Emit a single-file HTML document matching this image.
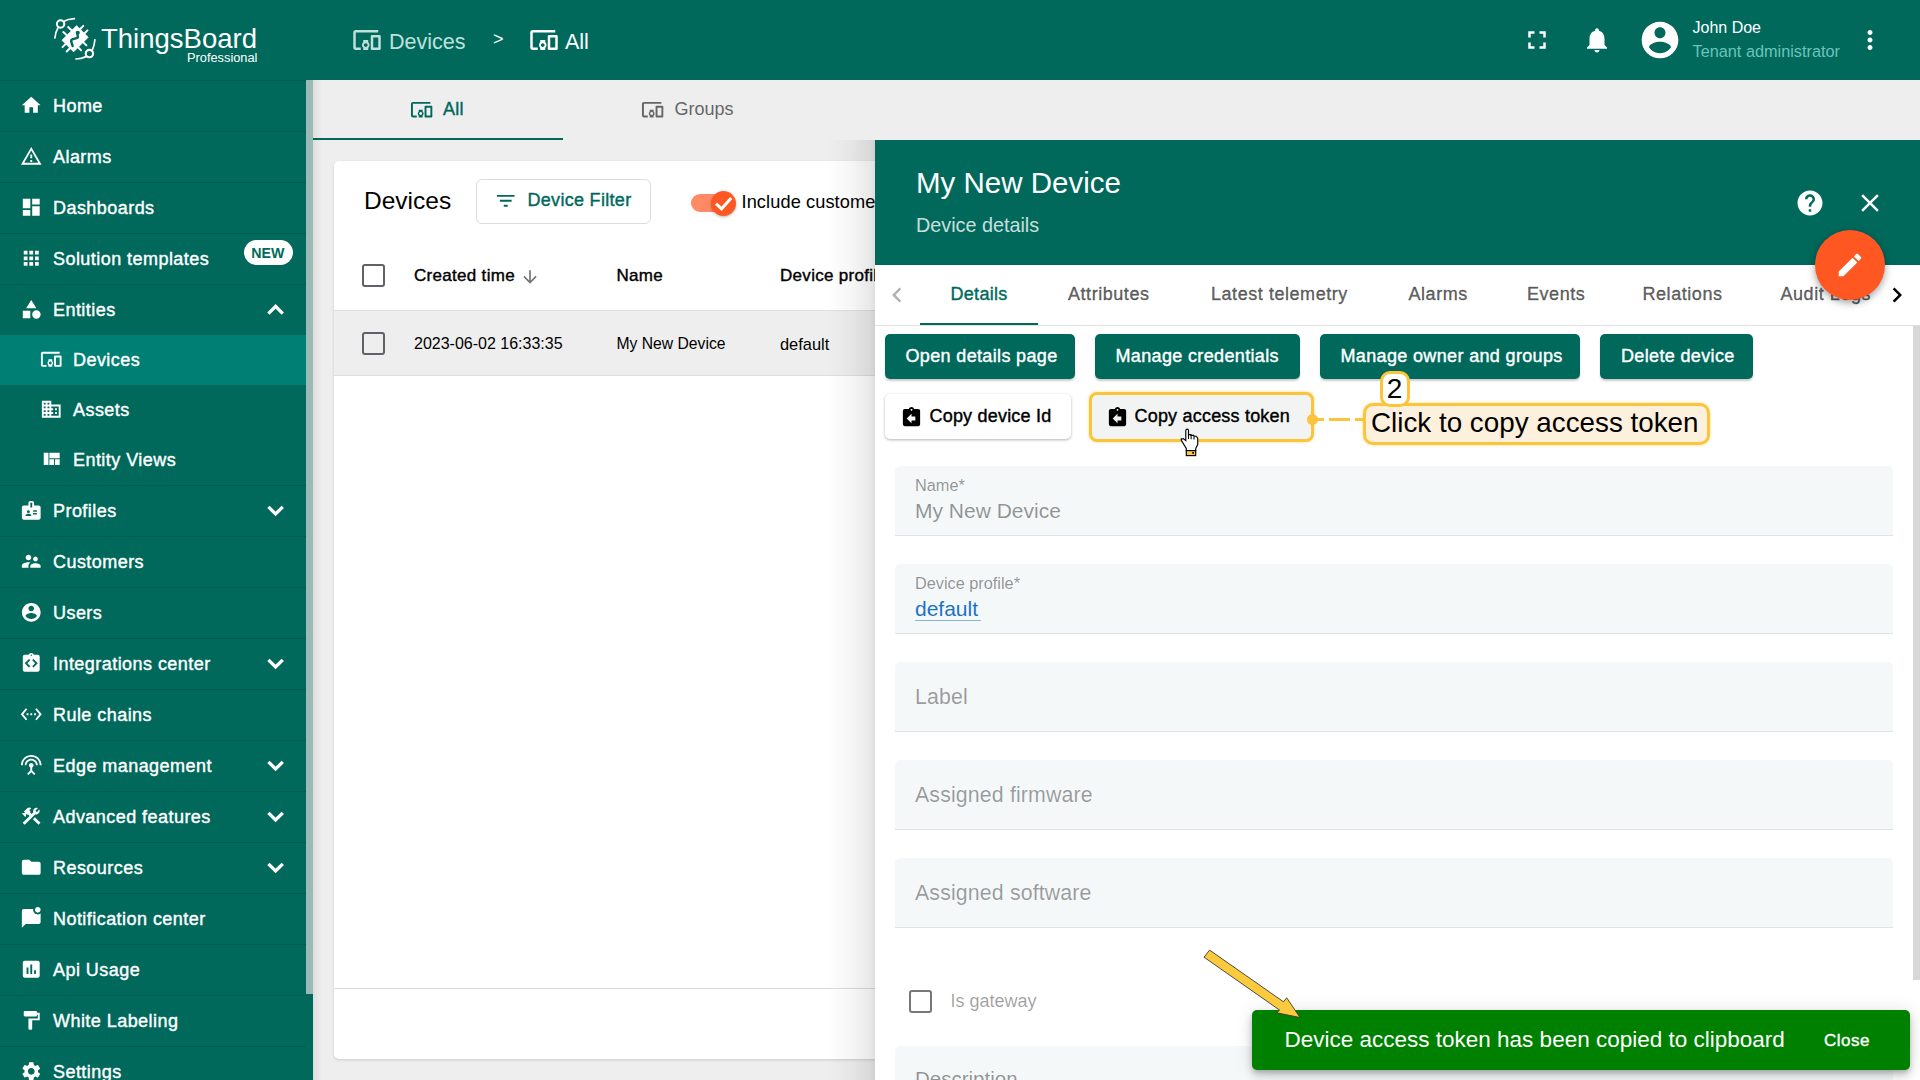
<!DOCTYPE html><html><head><meta charset="utf-8"><style>
html,body{margin:0;padding:0;width:1920px;height:1080px;overflow:hidden;background:#eeeeee;font-family:"Liberation Sans",sans-serif;}
.t{position:absolute;white-space:nowrap;line-height:1;}
.m{-webkit-text-stroke:0.4px currentColor;}
.i{position:absolute;display:block;}
.b{position:absolute;box-sizing:border-box;}
</style></head><body>
<div class="b" style="left:313px;top:80px;width:1607px;height:1000px;background:#eeeeee"></div>
<div class="b" style="left:313px;top:138px;width:250px;height:2px;background:#00695c"></div>
<svg class="i" style="left:409.8px;top:97.9px;width:23.3px;height:23.3px;" viewBox="0 0 24 24"><path fill="#00695c" d="M3 6h18V4H3c-1.1 0-2 .9-2 2v12c0 1.1.9 2 2 2h4v-2H3V6zm10 6H9v1.78c-.61.55-1 1.33-1 2.22s.39 1.67 1 2.22V20h4v-1.78c.61-.55 1-1.34 1-2.22s-.39-1.67-1-2.22V12zm-2 5.5c-.83 0-1.5-.67-1.5-1.5s.67-1.5 1.5-1.5 1.5.67 1.5 1.5-.67 1.5-1.5 1.5zM22 8h-6c-.5 0-1 .5-1 1v10c0 .5.5 1 1 1h6c.5 0 1-.5 1-1V9c0-.5-.5-1-1-1zm-1 10h-4v-8h4v8z"/></svg>
<div class="t m" style="left:443.0px;top:99.76px;font-size:18px;font-weight:400;color:#00695c;letter-spacing:0.3px;">All</div>
<svg class="i" style="left:641.0px;top:97.6px;width:23.3px;height:23.3px;" viewBox="0 0 24 24"><path fill="#666" d="M3 6h18V4H3c-1.1 0-2 .9-2 2v12c0 1.1.9 2 2 2h4v-2H3V6zm10 6H9v1.78c-.61.55-1 1.33-1 2.22s.39 1.67 1 2.22V20h4v-1.78c.61-.55 1-1.34 1-2.22s-.39-1.67-1-2.22V12zm-2 5.5c-.83 0-1.5-.67-1.5-1.5s.67-1.5 1.5-1.5 1.5.67 1.5 1.5-.67 1.5-1.5 1.5zM22 8h-6c-.5 0-1 .5-1 1v10c0 .5.5 1 1 1h6c.5 0 1-.5 1-1V9c0-.5-.5-1-1-1zm-1 10h-4v-8h4v8z"/></svg>
<div class="t" style="left:674.5px;top:99.76px;font-size:18px;font-weight:400;color:#666;">Groups</div>
<div class="b" style="left:313px;top:80px;width:9px;height:1000px;background:linear-gradient(90deg,rgba(0,0,0,.07),rgba(0,0,0,0))"></div>
<div class="b" style="left:334px;top:161px;width:700px;height:898px;background:#fff;border-radius:5px;box-shadow:0 1px 3px rgba(0,0,0,.15)"></div>
<div class="t" style="left:364.0px;top:188.86px;font-size:24.5px;font-weight:400;color:#000;">Devices</div>
<div class="b" style="left:476px;top:179px;width:175px;height:45px;border:1px solid #dcdcdc;border-radius:6px;background:#fff"></div>
<svg class="i" style="left:494.3px;top:188.8px;width:23.5px;height:23.5px;" viewBox="0 0 24 24"><path fill="#00695c" d="M10 18h4v-2h-4v2zM3 6v2h18V6H3zm3 7h12v-2H6v2z"/></svg>
<div class="t m" style="left:527.5px;top:190.56px;font-size:18px;font-weight:400;color:#00695c;letter-spacing:0.3px;">Device Filter</div>
<div class="b" style="left:691px;top:194px;width:43px;height:18px;border-radius:9px;background:#ff8a65"></div>
<div class="b" style="left:711px;top:190.5px;width:25px;height:25px;border-radius:50%;background:#ff5722;box-shadow:0 1px 3px rgba(0,0,0,.3)"></div>
<svg class="i" style="left:705px;top:190px;width:35px;height:25px" viewBox="705 190 35 25"><path d="M716 203.6L721.6 208.8L731.2 198" fill="none" stroke="#fff" stroke-width="3"/></svg>
<div class="t" style="left:741.5px;top:193.09px;font-size:18.2px;font-weight:400;color:#000;letter-spacing:0.1px;">Include customer entities</div>
<div class="b" style="left:362px;top:264px;width:22.5px;height:22.5px;border:2.5px solid #5f6368;border-radius:3px"></div>
<div class="t m" style="left:414.0px;top:267.11px;font-size:17px;font-weight:400;color:#000;letter-spacing:0.3px;">Created time</div>
<svg class="i" style="left:519.7px;top:266.5px;width:20px;height:20px;" viewBox="0 0 24 24"><path fill="#757575" d="M20 12l-1.41-1.41L13 16.17V4h-2v12.17l-5.58-5.59L4 12l8 8 8-8z"/></svg>
<div class="t m" style="left:616.5px;top:267.11px;font-size:17px;font-weight:400;color:#000;letter-spacing:0.3px;">Name</div>
<div class="t m" style="left:780.0px;top:267.11px;font-size:17px;font-weight:400;color:#000;letter-spacing:0.3px;">Device profile</div>
<div class="b" style="left:334px;top:310px;width:541px;height:66px;background:#eeeeee;border-top:1px solid #e0e0e0;border-bottom:1px solid #dedede"></div>
<div class="b" style="left:362px;top:332px;width:22.5px;height:22.5px;border:2.5px solid #5f6368;border-radius:3px"></div>
<div class="t" style="left:414.0px;top:335.85px;font-size:16px;font-weight:400;color:#000;">2023-06-02 16:33:35</div>
<div class="t" style="left:616.5px;top:336.11px;font-size:15.7px;font-weight:400;color:#000;">My New Device</div>
<div class="t" style="left:780.0px;top:335.51px;font-size:16.4px;font-weight:400;color:#000;">default</div>
<div class="b" style="left:334px;top:988px;width:541px;height:1px;background:#dcdcdc"></div>
<div class="b" style="left:0;top:0;width:1920px;height:80px;background:#00695c"></div>
<svg class="i" style="left:352.0px;top:25.0px;width:30px;height:30px;" viewBox="0 0 24 24"><path fill="#bfe0db" d="M3 6h18V4H3c-1.1 0-2 .9-2 2v12c0 1.1.9 2 2 2h4v-2H3V6zm10 6H9v1.78c-.61.55-1 1.33-1 2.22s.39 1.67 1 2.22V20h4v-1.78c.61-.55 1-1.34 1-2.22s-.39-1.67-1-2.22V12zm-2 5.5c-.83 0-1.5-.67-1.5-1.5s.67-1.5 1.5-1.5 1.5.67 1.5 1.5-.67 1.5-1.5 1.5zM22 8h-6c-.5 0-1 .5-1 1v10c0 .5.5 1 1 1h6c.5 0 1-.5 1-1V9c0-.5-.5-1-1-1zm-1 10h-4v-8h4v8z"/></svg>
<div class="t" style="left:389.0px;top:32.10px;font-size:21.5px;font-weight:400;color:#bfe0db;">Devices</div>
<div class="t" style="left:493.0px;top:29.96px;font-size:18px;font-weight:400;color:#fff;">&gt;</div>
<svg class="i" style="left:529.0px;top:25.0px;width:30px;height:30px;" viewBox="0 0 24 24"><path fill="#fff" d="M3 6h18V4H3c-1.1 0-2 .9-2 2v12c0 1.1.9 2 2 2h4v-2H3V6zm10 6H9v1.78c-.61.55-1 1.33-1 2.22s.39 1.67 1 2.22V20h4v-1.78c.61-.55 1-1.34 1-2.22s-.39-1.67-1-2.22V12zm-2 5.5c-.83 0-1.5-.67-1.5-1.5s.67-1.5 1.5-1.5 1.5.67 1.5 1.5-.67 1.5-1.5 1.5zM22 8h-6c-.5 0-1 .5-1 1v10c0 .5.5 1 1 1h6c.5 0 1-.5 1-1V9c0-.5-.5-1-1-1zm-1 10h-4v-8h4v8z"/></svg>
<div class="t" style="left:565.0px;top:32.10px;font-size:21.5px;font-weight:400;color:#fff;">All</div>
<svg class="i" style="left:1522.0px;top:25.0px;width:30px;height:30px;" viewBox="0 0 24 24"><path fill="#fff" d="M7 14H5v5h5v-2H7v-3zm-2-4h2V7h3V5H5v5zm12 7h-3v2h5v-5h-2v3zM14 5v2h3v3h2V5h-5z"/></svg>
<svg class="i" style="left:1582.0px;top:25.0px;width:30px;height:30px;" viewBox="0 0 24 24"><path fill="#fff" d="M12 22c1.1 0 2-.9 2-2h-4c0 1.1.89 2 2 2zm6-6v-5c0-3.07-1.64-5.64-4.5-6.32V4c0-.83-.67-1.5-1.5-1.5s-1.5.67-1.5 1.5v.68C7.63 5.36 6 7.92 6 11v5l-2 2v1h16v-1l-2-2z"/></svg>
<svg class="i" style="left:1638.0px;top:18.4px;width:44px;height:44px;" viewBox="0 0 24 24"><path fill="#fff" d="M12 2C6.48 2 2 6.48 2 12s4.48 10 10 10 10-4.48 10-10S17.52 2 12 2zm0 3c1.66 0 3 1.34 3 3s-1.34 3-3 3-3-1.34-3-3 1.34-3 3-3zm0 14.2c-2.5 0-4.71-1.28-6-3.22.03-1.99 4-3.08 6-3.08 1.99 0 5.970 1.09 6 3.08-1.29 1.94-3.5 3.22-6 3.22z"/></svg>
<div class="t" style="left:1692.5px;top:19.65px;font-size:16px;font-weight:400;color:#fff;">John Doe</div>
<div class="t" style="left:1692.5px;top:43.00px;font-size:16.3px;font-weight:400;color:#6cc4ba;">Tenant administrator</div>
<svg class="i" style="left:1855.0px;top:25.0px;width:30px;height:30px;" viewBox="0 0 24 24"><path fill="#fff" d="M12 8c1.1 0 2-.9 2-2s-.9-2-2-2-2 .9-2 2 .9 2 2 2zm0 2c-1.1 0-2 .9-2 2s.9 2 2 2 2-.9 2-2-.9-2-2-2zm0 6c-1.1 0-2 .9-2 2s.9 2 2 2 2-.9 2-2-.9-2-2-2z"/></svg>
<svg class="i" style="left:50px;top:14px;width:50px;height:50px" viewBox="0 0 50 50"><g fill="none" stroke="#fff" stroke-linecap="round"><circle cx="10.6" cy="10" r="3.7" stroke-width="2.1"/><circle cx="39.4" cy="39.6" r="3.7" stroke-width="2.1"/><path d="M13.9 7.2 Q18 5 24.4 4.6" stroke-width="1.7"/><path d="M8 13.8 Q5.5 18 4.9 24" stroke-width="1.7"/><path d="M42.4 35.9 Q44.5 31 44.9 25.8" stroke-width="1.7"/><path d="M36.2 42.6 Q31 44.8 25.9 45" stroke-width="1.7"/><path d="M13.3 18.1L17 21.5M18.1 13.1L21.8 16.6M33.3 11.9L30 15.3M37.5 16.4L34.1 19.8M36.4 31.4L33 28M31.1 36.4L27.8 33M12.5 33.1L16 29.6M16.7 37.5L20.1 34" stroke-width="2"/></g><path d="M26.6 11.5L38.3 23.2L23.6 37.9L11.9 26.2Z" fill="#fff" stroke="#fff" stroke-width="0.6" stroke-linejoin="round"/><path d="M27 18.4L27.8 21.6Q28.5 23.5 26.5 24.1L22.2 25.4Q20.9 25.9 21.2 27.4L22.6 32" fill="none" stroke="#00695c" stroke-width="2.5" stroke-linecap="round" stroke-linejoin="round"/><circle cx="27.9" cy="18.7" r="1.9" fill="#00695c"/></svg>
<div class="t" style="left:101.0px;top:24.82px;font-size:27.5px;font-weight:400;color:#fff;">ThingsBoard</div>
<div class="t" style="left:187.0px;top:51.86px;font-size:12.8px;font-weight:400;color:#fff;">Professional</div>
<div class="b" style="left:0;top:80px;width:313px;height:1000px;background:#00695c"></div>
<div class="b" style="left:306px;top:80px;width:7px;height:914px;background:#9bbab6"></div>
<div class="b" style="left:0;top:80px;width:306px;height:1px;background:#005b50"></div>
<svg class="i" style="left:20.0px;top:93.9px;width:22.5px;height:22.5px;" viewBox="0 0 24 24"><path fill="#fff" d="M10 20v-6h4v6h5v-8h3L12 3 2 12h3v8z"/></svg>
<div class="t m" style="left:53.0px;top:96.86px;font-size:18px;font-weight:400;color:#fff;letter-spacing:0.45px;">Home</div>
<div class="b" style="left:0;top:131px;width:306px;height:1px;background:#005b50"></div>
<svg class="i" style="left:20.0px;top:144.9px;width:22.5px;height:22.5px;" viewBox="0 0 24 24"><path fill="#fff" d="M12 5.99L19.53 19H4.47L12 5.99M12 2L1 21h22L12 2zm1 14h-2v2h2v-2zm0-6h-2v4h2v-4z"/></svg>
<div class="t m" style="left:53.0px;top:147.86px;font-size:18px;font-weight:400;color:#fff;letter-spacing:0.45px;">Alarms</div>
<div class="b" style="left:0;top:182px;width:306px;height:1px;background:#005b50"></div>
<svg class="i" style="left:20.0px;top:195.9px;width:22.5px;height:22.5px;" viewBox="0 0 24 24"><path fill="#fff" d="M3 13h8V3H3v10zm0 8h8v-6H3v6zm10 0h8V11h-8v10zm0-18v6h8V3h-8z"/></svg>
<div class="t m" style="left:53.0px;top:198.86px;font-size:18px;font-weight:400;color:#fff;letter-spacing:0.45px;">Dashboards</div>
<div class="b" style="left:0;top:233px;width:306px;height:1px;background:#005b50"></div>
<svg class="i" style="left:20.0px;top:246.9px;width:22.5px;height:22.5px;" viewBox="0 0 24 24"><path fill="#fff" d="M4 8h4V4H4v4zm6 12h4v-4h-4v4zm-6 0h4v-4H4v4zm0-6h4v-4H4v4zm6 0h4v-4h-4v4zm6-10v4h4V4h-4zm-6 4h4V4h-4v4zm6 6h4v-4h-4v4zm0 6h4v-4h-4v4z"/></svg>
<div class="t m" style="left:53.0px;top:249.86px;font-size:18px;font-weight:400;color:#fff;letter-spacing:0.45px;">Solution templates</div>
<div class="b" style="left:244px;top:240px;width:49px;height:25px;border-radius:12.5px;background:#fff"></div>
<div class="t" style="left:251.2px;top:245.68px;font-size:14.2px;font-weight:700;color:#00695c;">NEW</div>
<div class="b" style="left:0;top:284px;width:306px;height:1px;background:#005b50"></div>
<svg class="i" style="left:20.0px;top:297.9px;width:22.5px;height:22.5px;" viewBox="0 0 24 24"><path fill="#fff" d="M12 2l-5.5 9h11zM17.5 13a4.5 4.5 0 1 0 0 9a4.5 4.5 0 1 0 0-9zM3 13.5h8v8H3z"/></svg>
<div class="t m" style="left:53.0px;top:300.86px;font-size:18px;font-weight:400;color:#fff;letter-spacing:0.45px;">Entities</div>
<svg class="i" style="left:260px;top:285px;width:32px;height:50px" viewBox="260 285 32 50"><path d="M268.4 313.6L275.6 306.4L282.8 313.6" fill="none" stroke="#fff" stroke-width="3.3"/></svg>
<div class="b" style="left:0;top:335px;width:306px;height:50px;background:#008074"></div>
<svg class="i" style="left:40.0px;top:347.9px;width:22.5px;height:22.5px;" viewBox="0 0 24 24"><path fill="#fff" d="M3 6h18V4H3c-1.1 0-2 .9-2 2v12c0 1.1.9 2 2 2h4v-2H3V6zm10 6H9v1.78c-.61.55-1 1.33-1 2.22s.39 1.67 1 2.22V20h4v-1.78c.61-.55 1-1.34 1-2.22s-.39-1.67-1-2.22V12zm-2 5.5c-.83 0-1.5-.67-1.5-1.5s.67-1.5 1.5-1.5 1.5.67 1.5 1.5-.67 1.5-1.5 1.5zM22 8h-6c-.5 0-1 .5-1 1v10c0 .5.5 1 1 1h6c.5 0 1-.5 1-1V9c0-.5-.5-1-1-1zm-1 10h-4v-8h4v8z"/></svg>
<div class="t m" style="left:73.0px;top:350.86px;font-size:18px;font-weight:400;color:#fff;letter-spacing:0.45px;">Devices</div>
<svg class="i" style="left:40.0px;top:397.9px;width:22.5px;height:22.5px;" viewBox="0 0 24 24"><path fill="#fff" d="M12 7V3H2v18h20V7H12zM6 19H4v-2h2v2zm0-4H4v-2h2v2zm0-4H4V9h2v2zm0-4H4V5h2v2zm4 12H8v-2h2v2zm0-4H8v-2h2v2zm0-4H8V9h2v2zm0-4H8V5h2v2zm10 12h-8v-2h2v-2h-2v-2h2v-2h-2V9h8v10zm-2-8h-2v2h2v-2zm0 4h-2v2h2v-2z"/></svg>
<div class="t m" style="left:73.0px;top:400.86px;font-size:18px;font-weight:400;color:#fff;letter-spacing:0.45px;">Assets</div>
<svg class="i" style="left:40.0px;top:447.9px;width:22.5px;height:22.5px;" viewBox="0 0 24 24"><path fill="#fff" d="M10 18h5v-6h-5v6zm-6 0h5V5H4v13zm12 0h5v-6h-5v6zM10 5v6h11V5H10z"/></svg>
<div class="t m" style="left:73.0px;top:450.86px;font-size:18px;font-weight:400;color:#fff;letter-spacing:0.45px;">Entity Views</div>
<div class="b" style="left:0;top:485px;width:306px;height:1px;background:#005b50"></div>
<svg class="i" style="left:20.0px;top:498.9px;width:22.5px;height:22.5px;" viewBox="0 0 24 24"><path fill="#fff" d="M20 7h-5V4c0-1.1-.9-2-2-2h-2c-1.1 0-2 .9-2 2v3H4c-1.1 0-2 .9-2 2v11c0 1.1.9 2 2 2h16c1.1 0 2-.9 2-2V9c0-1.1-.9-2-2-2zM9 12c.83 0 1.5.67 1.5 1.5S9.830 15 9 15s-1.5-.67-1.5-1.5S8.17 12 9 12zm3 6H6v-.43c0-.6.36-1.15.92-1.39.64-.28 1.34-.43 2.080-.43s1.44.15 2.08.43c.55.24.92.78.92 1.39V18zm1-9h-2V4h2v5zm5 7.5h-4V15h4v1.5zm0-3h-4V12h4v1.5z"/></svg>
<div class="t m" style="left:53.0px;top:501.86px;font-size:18px;font-weight:400;color:#fff;letter-spacing:0.45px;">Profiles</div>
<svg class="i" style="left:260px;top:486px;width:32px;height:50px" viewBox="260 486 32 50"><path d="M268.4 506.8L275.6 514L282.8 506.8" fill="none" stroke="#fff" stroke-width="3.3"/></svg>
<div class="b" style="left:0;top:536px;width:306px;height:1px;background:#005b50"></div>
<svg class="i" style="left:20.0px;top:549.9px;width:22.5px;height:22.5px;" viewBox="0 0 24 24"><path fill="#fff" d="M16.5 12c1.38 0 2.49-1.12 2.49-2.5S17.88 7 16.5 7C15.12 7 14 8.12 14 9.5s1.12 2.5 2.5 2.5zM9 11c1.66 0 2.99-1.34 2.99-3S10.66 5 9 5C7.34 5 6 6.34 6 8s1.34 3 3 3zm7.5 3c-1.83 0-5.5.92-5.5 2.75V19h11v-2.25c0-1.83-3.67-2.75-5.5-2.75zM9 13c-2.33 0-7 1.17-7 3.5V19h7v-2.25c0-.85.33-2.34 2.37-3.47C10.5 13.1 9.66 13 9 13z"/></svg>
<div class="t m" style="left:53.0px;top:552.86px;font-size:18px;font-weight:400;color:#fff;letter-spacing:0.45px;">Customers</div>
<div class="b" style="left:0;top:587px;width:306px;height:1px;background:#005b50"></div>
<svg class="i" style="left:20.0px;top:600.9px;width:22.5px;height:22.5px;" viewBox="0 0 24 24"><path fill="#fff" d="M12 2C6.48 2 2 6.48 2 12s4.48 10 10 10 10-4.48 10-10S17.52 2 12 2zm0 3c1.66 0 3 1.34 3 3s-1.34 3-3 3-3-1.34-3-3 1.34-3 3-3zm0 14.2c-2.5 0-4.71-1.28-6-3.22.03-1.99 4-3.08 6-3.08 1.99 0 5.970 1.09 6 3.08-1.29 1.94-3.5 3.22-6 3.22z"/></svg>
<div class="t m" style="left:53.0px;top:603.86px;font-size:18px;font-weight:400;color:#fff;letter-spacing:0.45px;">Users</div>
<div class="b" style="left:0;top:638px;width:306px;height:1px;background:#005b50"></div>
<svg class="i" style="left:20.0px;top:651.9px;width:22.5px;height:22.5px;" viewBox="0 0 24 24"><path fill="#fff" d="M19 3h-4.18C14.4 1.84 13.3 1 12 1s-2.4.84-2.82 2H5c-1.1 0-2 .9-2 2v14c0 1.1.9 2 2 2h14c1.1 0 2-.9 2-2V5c0-1.1-.9-2-2-2zm-8 12.17L9.59 16.59 5 12l4.59-4.59L11 8.83 7.83 12 11 15.17zM12 4.25c-.41 0-.75-.34-.75-.75s.34-.75.75-.75.75.34.75.75-.34.75-.75.75zm2.41 12.34L13 15.17 16.17 12 13 8.83l1.41-1.42L19 12l-4.59 4.59z"/></svg>
<div class="t m" style="left:53.0px;top:654.86px;font-size:18px;font-weight:400;color:#fff;letter-spacing:0.45px;">Integrations center</div>
<svg class="i" style="left:260px;top:639px;width:32px;height:50px" viewBox="260 639 32 50"><path d="M268.4 659.8L275.6 667L282.8 659.8" fill="none" stroke="#fff" stroke-width="3.3"/></svg>
<div class="b" style="left:0;top:689px;width:306px;height:1px;background:#005b50"></div>
<svg class="i" style="left:20.0px;top:702.9px;width:22.5px;height:22.5px;" viewBox="0 0 24 24"><path fill="#fff" d="M7.77 6.76L6.23 5.48.82 12l5.41 6.52 1.54-1.28L3.42 12l4.35-5.24zM7 13h2v-2H7v2zm10-2h-2v2h2v-2zm-6 2h2v-2h-2v2zm6.77-7.52l-1.54 1.28L20.58 12l-4.35 5.24 1.54 1.28L23.18 12l-5.41-6.52z"/></svg>
<div class="t m" style="left:53.0px;top:705.86px;font-size:18px;font-weight:400;color:#fff;letter-spacing:0.45px;">Rule chains</div>
<div class="b" style="left:0;top:740px;width:306px;height:1px;background:#005b50"></div>
<svg class="i" style="left:20.0px;top:753.9px;width:22.5px;height:22.5px;" viewBox="0 0 24 24"><path fill="#fff" d="M12 5c-3.87 0-7 3.13-7 7h2c0-2.76 2.24-5 5-5s5 2.24 5 5h2c0-3.87-3.13-7-7-7zm1 9.29c.88-.39 1.5-1.26 1.5-2.290 0-1.38-1.12-2.5-2.5-2.5S9.5 10.62 9.5 12c0 1.02.62 1.9 1.5 2.29v3.3L7.59 21 9 22.41l3-3 3 3L16.41 21 13 17.59v-3.3zM12 1C5.93 1 1 5.93 1 12h2c0-4.97 4.03-9 9-9s9 4.03 9 9h2c0-6.07-4.93-11-11-11z"/></svg>
<div class="t m" style="left:53.0px;top:756.86px;font-size:18px;font-weight:400;color:#fff;letter-spacing:0.45px;">Edge management</div>
<svg class="i" style="left:260px;top:741px;width:32px;height:50px" viewBox="260 741 32 50"><path d="M268.4 761.8L275.6 769L282.8 761.8" fill="none" stroke="#fff" stroke-width="3.3"/></svg>
<div class="b" style="left:0;top:791px;width:306px;height:1px;background:#005b50"></div>
<svg class="i" style="left:20.0px;top:804.9px;width:22.5px;height:22.5px;" viewBox="0 0 24 24"><path fill="#fff" d="M13.783 15.172l2.121-2.121 5.996 5.996-2.121 2.121zM17.5 10c1.93 0 3.5-1.57 3.5-3.5 0-.58-.16-1.12-.41-1.6l-2.7 2.7-1.49-1.49 2.7-2.7c-.48-.25-1.02-.41-1.6-.41C15.57 3 14 4.57 14 6.5c0 .41.08.8.21 1.16l-1.85 1.85-1.78-1.78.71-.71-1.41-1.41L12 3.49c-1.17-1.17-3.07-1.17-4.240 0L4.22 7.03l1.41 1.41H2.81l-.71.71 3.54 3.54.71-.71V9.15l1.41 1.41.71-.71 1.78 1.78-7.41 7.41 2.12 2.12L16.34 9.79c.36.13.75.21 1.16.21z"/></svg>
<div class="t m" style="left:53.0px;top:807.86px;font-size:18px;font-weight:400;color:#fff;letter-spacing:0.45px;">Advanced features</div>
<svg class="i" style="left:260px;top:792px;width:32px;height:50px" viewBox="260 792 32 50"><path d="M268.4 812.8L275.6 820L282.8 812.8" fill="none" stroke="#fff" stroke-width="3.3"/></svg>
<div class="b" style="left:0;top:842px;width:306px;height:1px;background:#005b50"></div>
<svg class="i" style="left:20.0px;top:855.9px;width:22.5px;height:22.5px;" viewBox="0 0 24 24"><path fill="#fff" d="M10 4H4c-1.1 0-1.99.9-1.99 2L2 18c0 1.1.9 2 2 2h16c1.1 0 2-.9 2-2V8c0-1.1-.9-2-2-2h-8l-2-2z"/></svg>
<div class="t m" style="left:53.0px;top:858.86px;font-size:18px;font-weight:400;color:#fff;letter-spacing:0.45px;">Resources</div>
<svg class="i" style="left:260px;top:843px;width:32px;height:50px" viewBox="260 843 32 50"><path d="M268.4 863.8L275.6 871L282.8 863.8" fill="none" stroke="#fff" stroke-width="3.3"/></svg>
<div class="b" style="left:0;top:893px;width:306px;height:1px;background:#005b50"></div>
<svg class="i" style="left:20.0px;top:906.9px;width:22.5px;height:22.5px;" viewBox="0 0 24 24"><path fill="#fff" d="M22 6.98V16c0 1.1-.9 2-2 2H6l-4 4V4c0-1.1.9-2 2-2h10.1c-.06.32-.1.66-.1 1 0 2.76 2.24 5 5 5 1.13 0 2.16-.39 3-1.02zM16 3c0 1.66 1.34 3 3 3s3-1.34 3-3-1.34-3-3-3-3 1.34-3 3z"/></svg>
<div class="t m" style="left:53.0px;top:909.86px;font-size:18px;font-weight:400;color:#fff;letter-spacing:0.45px;">Notification center</div>
<div class="b" style="left:0;top:944px;width:306px;height:1px;background:#005b50"></div>
<svg class="i" style="left:20.0px;top:957.9px;width:22.5px;height:22.5px;" viewBox="0 0 24 24"><path fill="#fff" d="M19 3H5c-1.1 0-2 .9-2 2v14c0 1.1.9 2 2 2h14c1.1 0 2-.9 2-2V5c0-1.1-.9-2-2-2zM9 17H7v-7h2v7zm4 0h-2V7h2v10zm4 0h-2v-4h2v4z"/></svg>
<div class="t m" style="left:53.0px;top:960.86px;font-size:18px;font-weight:400;color:#fff;letter-spacing:0.45px;">Api Usage</div>
<div class="b" style="left:0;top:995px;width:306px;height:1px;background:#005b50"></div>
<svg class="i" style="left:20.0px;top:1008.9px;width:22.5px;height:22.5px;" viewBox="0 0 24 24"><path fill="#fff" d="M18 4V3c0-.55-.45-1-1-1H5c-.55 0-1 .45-1 1v4c0 .55.45 1 1 1h12c.55 0 1-.45 1-1V6h1v4H9v11c0 .55.45 1 1 1h2c.55 0 1-.45 1-1v-9h8V4h-3z"/></svg>
<div class="t m" style="left:53.0px;top:1011.86px;font-size:18px;font-weight:400;color:#fff;letter-spacing:0.45px;">White Labeling</div>
<div class="b" style="left:0;top:1046px;width:306px;height:1px;background:#005b50"></div>
<svg class="i" style="left:20.0px;top:1059.9px;width:22.5px;height:22.5px;" viewBox="0 0 24 24"><path fill="#fff" d="M19.14 12.94c.04-.3.06-.61.06-.94 0-.32-.02-.64-.07-.94l2.03-1.58c.18-.14.23-.41.12-.61l-1.92-3.32c-.12-.22-.37-.29-.59-.22l-2.39.96c-.5-.38-1.03-.7-1.62-.94l-.36-2.54c-.04-.24-.24-.41-.48-.41h-3.84c-.24 0-.43.17-.47.41l-.36 2.54c-.59.24-1.13.57-1.62.94l-2.39-.96c-.22-.08-.47 0-.59.22L2.74 8.87c-.12.21-.08.47.12.61l2.030 1.58c-.05.3-.09.63-.09.94s.02.64.07.94l-2.03 1.58c-.18.14-.23.41-.12.61l1.92 3.32c.12.22.37.29.59.22l2.39-.96c.5.38 1.03.7 1.62.94l.36 2.54c.05.24.24.41.48.41h3.84c.24 0 .44-.17.47-.41l.36-2.54c.59-.24 1.13-.56 1.62-.94l2.39.96c.22.08.47 0 .59-.22l1.92-3.32c.12-.22.07-.47-.12-.61l-2.01-1.58zM12 15.6c-1.98 0-3.6-1.62-3.6-3.6s1.62-3.6 3.6-3.6 3.6 1.62 3.6 3.6-1.62 3.6-3.6 3.6z"/></svg>
<div class="t m" style="left:53.0px;top:1062.86px;font-size:18px;font-weight:400;color:#fff;letter-spacing:0.45px;">Settings</div>
<div class="b" style="left:827px;top:140px;width:48px;height:940px;background:linear-gradient(90deg,rgba(0,0,0,0),rgba(0,0,0,.035) 50%,rgba(0,0,0,.09) 90%,rgba(0,0,0,.13))"></div>
<div class="b" style="left:875px;top:140px;width:1045px;height:940px;background:#fff"></div>
<div class="b" style="left:875px;top:140px;width:1045px;height:125px;background:#00695c"></div>
<div class="t" style="left:916.0px;top:168.12px;font-size:29.5px;font-weight:400;color:#fff;">My New Device</div>
<div class="t" style="left:916.0px;top:215.84px;font-size:19.8px;font-weight:400;color:rgba(255,255,255,.8);">Device details</div>
<svg class="i" style="left:1795.0px;top:188.0px;width:30px;height:30px;" viewBox="0 0 24 24"><path fill="#fff" d="M12 2C6.48 2 2 6.48 2 12s4.48 10 10 10 10-4.48 10-10S17.52 2 12 2zm1 17h-2v-2h2v2zm2.07-7.75l-.9.92C13.45 12.9 13 13.5 13 15h-2v-.5c0-1.1.45-2.1 1.17-2.83l1.24-1.26c.37-.36.59-.86.59-1.41 0-1.1-.9-2-2-2s-2 .9-2 2H8c0-2.21 1.79-4 4-4s4 1.79 4 4c0 .88-.36 1.68-.93 2.25z"/></svg>
<svg class="i" style="left:1855.0px;top:188.0px;width:30px;height:30px;" viewBox="0 0 24 24"><path fill="#fff" d="M19 6.41L17.59 5 12 10.59 6.41 5 5 6.41 10.59 12 5 17.59 6.41 19 12 13.41 17.59 19 19 17.59 13.41 12z"/></svg>
<div class="b" style="left:875px;top:325px;width:1045px;height:1px;background:#e0e0e0"></div>
<svg class="i" style="left:882.0px;top:280.0px;width:30px;height:30px;" viewBox="0 0 24 24"><path fill="rgba(0,0,0,.3)" d="M15.41 7.41L14 6l-6 6 6 6 1.41-1.41L10.83 12z"/></svg>
<div class="t m" style="left:950.5px;top:284.76px;font-size:18px;font-weight:400;color:#00695c;letter-spacing:0.3px;">Details</div>
<div class="b" style="left:920px;top:322.5px;width:118px;height:2.5px;background:#00695c"></div>
<div class="t m" style="left:1068.0px;top:284.76px;font-size:18px;font-weight:400;color:rgba(0,0,0,.6);letter-spacing:0.55px;">Attributes</div>
<div class="t m" style="left:1211.0px;top:284.76px;font-size:18px;font-weight:400;color:rgba(0,0,0,.6);letter-spacing:0.55px;">Latest telemetry</div>
<div class="t m" style="left:1408.5px;top:284.76px;font-size:18px;font-weight:400;color:rgba(0,0,0,.6);letter-spacing:0.55px;">Alarms</div>
<div class="t m" style="left:1527.0px;top:284.76px;font-size:18px;font-weight:400;color:rgba(0,0,0,.6);letter-spacing:0.55px;">Events</div>
<div class="t m" style="left:1642.5px;top:284.76px;font-size:18px;font-weight:400;color:rgba(0,0,0,.6);letter-spacing:0.55px;">Relations</div>
<div class="t m" style="left:1780.5px;top:284.76px;font-size:18px;font-weight:400;color:rgba(0,0,0,.6);letter-spacing:0.55px;">Audit Logs</div>
<div class="b" style="left:1876px;top:266px;width:37px;height:58px;background:#fff"></div>
<svg class="i" style="left:1882.0px;top:280.0px;width:30px;height:30px;" viewBox="0 0 24 24"><path fill="#000" d="M10 6L8.59 7.41 13.17 12l-4.58 4.59L10 18l6-6z"/></svg>
<div class="b" style="left:1815px;top:230px;width:70px;height:70px;border-radius:50%;background:#ff5722;box-shadow:0 3px 6px rgba(0,0,0,.25),0 2px 12px rgba(0,0,0,.15)"></div>
<svg class="i" style="left:1835.0px;top:250.0px;width:30px;height:30px;" viewBox="0 0 24 24"><path fill="#fff" d="M3 17.25V21h3.75L17.81 9.94l-3.75-3.75L3 17.25zM20.71 7.04c.39-.39.39-1.02 0-1.41l-2.34-2.34c-.39-.39-1.02-.39-1.41 0l-1.83 1.83 3.75 3.75 1.83-1.83z"/></svg>
<div class="b" style="left:1913px;top:326px;width:7px;height:654px;background:#d7d7d7"></div>
<div class="b" style="left:885px;top:334px;width:190px;height:45px;border-radius:5px;background:#00695c;box-shadow:0 2px 2px rgba(0,0,0,.2)"></div>
<div class="t m" style="left:905.5px;top:347.16px;font-size:18px;font-weight:400;color:#fff;letter-spacing:0.35px;">Open details page</div>
<div class="b" style="left:1095px;top:334px;width:205px;height:45px;border-radius:5px;background:#00695c;box-shadow:0 2px 2px rgba(0,0,0,.2)"></div>
<div class="t m" style="left:1115.5px;top:347.16px;font-size:18px;font-weight:400;color:#fff;letter-spacing:0.35px;">Manage credentials</div>
<div class="b" style="left:1320px;top:334px;width:260px;height:45px;border-radius:5px;background:#00695c;box-shadow:0 2px 2px rgba(0,0,0,.2)"></div>
<div class="t m" style="left:1340.5px;top:347.16px;font-size:18px;font-weight:400;color:#fff;letter-spacing:0.35px;">Manage owner and groups</div>
<div class="b" style="left:1600px;top:334px;width:153px;height:45px;border-radius:5px;background:#00695c;box-shadow:0 2px 2px rgba(0,0,0,.2)"></div>
<div class="t m" style="left:1621.0px;top:347.16px;font-size:18px;font-weight:400;color:#fff;letter-spacing:0.35px;">Delete device</div>
<div class="b" style="left:885px;top:394px;width:186px;height:45px;border-radius:5px;background:#fff;box-shadow:0 1px 3px rgba(0,0,0,.3)"></div>
<svg class="i" style="left:900.0px;top:406.0px;width:23px;height:23px;" viewBox="0 0 24 24"><path fill="#000" d="M19 3h-4.18C14.4 1.84 13.3 1 12 1c-1.3 0-2.4.84-2.82 2H5c-1.1 0-2 .9-2 2v14c0 1.1.9 2 2 2h14c1.1 0 2-.9 2-2V5c0-1.1-.9-2-2-2zm-7 0c.55 0 1 .45 1 1s-.45 1-1 1-1-.45-1-1 .45-1 1-1zm4 12h-4v3l-5-5 5-5v3h4v4z"/></svg>
<div class="t m" style="left:929.5px;top:407.26px;font-size:18px;font-weight:400;color:#000;letter-spacing:0.2px;">Copy device Id</div>
<div class="b" style="left:1089px;top:391.5px;width:225px;height:50.5px;border-radius:8px;background:#f2f4f4;border:3px solid #fbc43a;box-shadow:0 0 3px rgba(251,196,58,.6)"></div>
<svg class="i" style="left:1106.0px;top:406.0px;width:23px;height:23px;" viewBox="0 0 24 24"><path fill="#000" d="M19 3h-4.18C14.4 1.84 13.3 1 12 1c-1.3 0-2.4.84-2.82 2H5c-1.1 0-2 .9-2 2v14c0 1.1.9 2 2 2h14c1.1 0 2-.9 2-2V5c0-1.1-.9-2-2-2zm-7 0c.55 0 1 .45 1 1s-.45 1-1 1-1-.45-1-1 .45-1 1-1zm4 12h-4v3l-5-5 5-5v3h4v4z"/></svg>
<div class="t m" style="left:1134.5px;top:407.26px;font-size:18px;font-weight:400;color:#000;letter-spacing:0.2px;">Copy access token</div>
<div class="b" style="left:1306.7px;top:414px;width:11px;height:11px;border-radius:50%;background:#fbc43a"></div>
<div class="b" style="left:1312px;top:418px;width:52px;height:3px;background:linear-gradient(90deg,#fbc43a 0 11.7px,transparent 11.7px 17px,#fbc43a 17px 37.9px,transparent 37.9px 43px,#fbc43a 43px)"></div>
<div class="b" style="left:1363px;top:403.2px;width:347px;height:41.5px;border-radius:10px;background:#fdf0dd;border:3px solid #fbc43a;box-shadow:0 0 3px rgba(251,196,58,.6)"></div>
<div class="t" style="left:1371.0px;top:408.86px;font-size:27.8px;font-weight:400;color:#000;">Click to copy access token</div>
<div class="b" style="left:1380px;top:371.1px;width:30px;height:35.6px;border-radius:10px;background:#fff;border:3px solid #fbc43a"></div>
<div class="t" style="left:1386.8px;top:375.39px;font-size:28px;font-weight:400;color:#000;">2</div>
<div class="b" style="left:895px;top:466px;width:998px;height:70px;background:#f5f8f9;border-radius:5px 5px 0 0;border-bottom:1px solid #dfe3e5"></div>
<div class="t" style="left:915.0px;top:476.50px;font-size:16.3px;font-weight:400;color:rgba(0,0,0,.42);">Name*</div>
<div class="t" style="left:915.0px;top:500.02px;font-size:21px;font-weight:400;color:rgba(0,0,0,.42);">My New Device</div>
<div class="b" style="left:895px;top:564px;width:998px;height:70px;background:#f5f8f9;border-radius:5px 5px 0 0;border-bottom:1px solid #dfe3e5"></div>
<div class="t" style="left:915.0px;top:574.50px;font-size:16.3px;font-weight:400;color:rgba(0,0,0,.42);">Device profile*</div>
<div class="t" style="left:915.0px;top:598.02px;font-size:21px;font-weight:400;color:#1a73c6;">default</div>
<div class="b" style="left:915px;top:620px;width:66px;height:1px;background:#8ab4e0"></div>
<div class="b" style="left:895px;top:662px;width:998px;height:70px;background:#f5f8f9;border-radius:5px 5px 0 0;border-bottom:1px solid #dfe3e5"></div>
<div class="t" style="left:915.0px;top:687.27px;font-size:21.3px;font-weight:400;color:rgba(0,0,0,.38);letter-spacing:0.15px;">Label</div>
<div class="b" style="left:895px;top:760px;width:998px;height:70px;background:#f5f8f9;border-radius:5px 5px 0 0;border-bottom:1px solid #dfe3e5"></div>
<div class="t" style="left:915.0px;top:785.27px;font-size:21.3px;font-weight:400;color:rgba(0,0,0,.38);letter-spacing:0.15px;">Assigned firmware</div>
<div class="b" style="left:895px;top:858px;width:998px;height:70px;background:#f5f8f9;border-radius:5px 5px 0 0;border-bottom:1px solid #dfe3e5"></div>
<div class="t" style="left:915.0px;top:883.27px;font-size:21.3px;font-weight:400;color:rgba(0,0,0,.38);letter-spacing:0.15px;">Assigned software</div>
<div class="b" style="left:909px;top:990px;width:22.5px;height:22.5px;border:2.5px solid #777;border-radius:3px"></div>
<div class="t" style="left:950.5px;top:991.96px;font-size:18px;font-weight:400;color:rgba(0,0,0,.38);">Is gateway</div>
<div class="b" style="left:895px;top:1046px;width:998px;height:70px;background:#f5f8f9;border-radius:5px 5px 0 0"></div>
<div class="t" style="left:915.0px;top:1068.64px;font-size:20.5px;font-weight:400;color:rgba(0,0,0,.42);">Description</div>
<div class="b" style="left:1252px;top:1010px;width:658px;height:60px;border-radius:5px;background:#008000;box-shadow:0 3px 5px -1px rgba(0,0,0,.2),0 6px 10px 0 rgba(0,0,0,.14),0 1px 18px 0 rgba(0,0,0,.12)"></div>
<div class="t" style="left:1284.5px;top:1029.25px;font-size:22.5px;font-weight:400;color:#fff;">Device access token has been copied to clipboard</div>
<div class="t m" style="left:1824.0px;top:1032.01px;font-size:17px;font-weight:400;color:#fff;letter-spacing:0.5px;">Close</div>
<svg class="i" style="left:1195px;top:940px;width:115px;height:85px" viewBox="1195 940 115 85"><path d="M1209.6 950.1L1283.5 1001.8L1286.7 997.8L1300 1017.5L1276.8 1012.8L1279.6 1010.1L1204 957.2Z" fill="#fdca3e" stroke="#3a3a3a" stroke-width="0.9" stroke-linejoin="miter"/></svg>
<svg class="i" style="left:1178px;top:426px;width:24px;height:33px" viewBox="1178 426 24 33"><path d="M1185.8 440.6V430.6Q1185.8 429.1 1187.15 429.1Q1188.5 429.1 1188.5 430.6V434.6H1190.9V435.4H1193.5L1194.1 436.2H1196.1L1197.7 438.2V444.6L1195.7 448.6V450.6H1186.3V448.4L1181.3 440.4V438.8H1183.6Z" fill="#fff" stroke="#000" stroke-width="1.15" stroke-linejoin="miter"/><path d="M1188.5 434.6V439M1191.1 435.4V439.2M1194 436.2V439.6" stroke="#000" stroke-width="1.05" fill="none"/><rect x="1186.3" y="450.6" width="9.4" height="5" fill="#fdca3e" stroke="#000" stroke-width="1.15"/><rect x="1192.2" y="452" width="1.8" height="1.7" fill="#000"/></svg>
</body></html>
